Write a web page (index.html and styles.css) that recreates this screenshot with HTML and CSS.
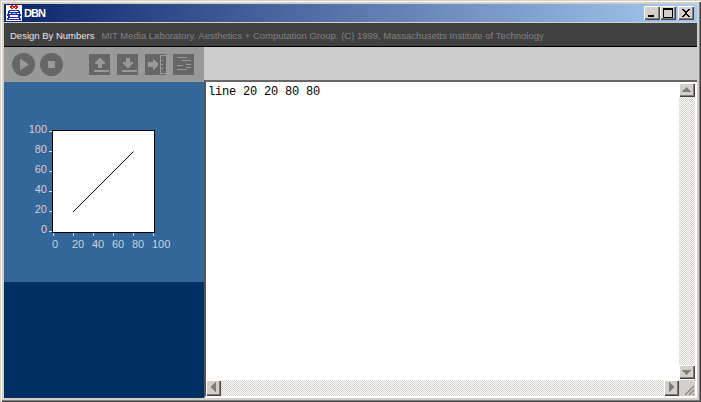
FILE: index.html
```html
<!DOCTYPE html>
<html lang="en">
<head>
<meta charset="utf-8">
<title>DBN</title>
<link rel="stylesheet" href="styles.css">
</head>
<body>
<div class="window">
  <header class="titlebar">
    <svg class="app-icon" width="16" height="16" viewBox="0 0 16 16" shape-rendering="crispEdges">
      <rect width="16" height="16" fill="#fff"/>
      <path d="M5 0h2v1h2V0h2v1h1v2h-1v1H9V3h1V2H9v1H7V2H6v1h1v1H5V3H4V1h1z" fill="#e01010"/>
      <path d="M3 5h10v1h1v3h1v2h-1v2h1v2H1v-2h1v-2H1V9h1V6h1z" fill="#1c2cb0"/>
      <path d="M4 6h8v1H4zM3 8h2v1H3zM11 8h2v1h-2zM4 10h8v2H4zM3 13h10v1H3z" fill="#fff"/>
      <path d="M6 8h4v1H6z" fill="#9aa4e8"/>
    </svg>
    <span class="app-name">DBN</span>
    <div class="win-controls">
      <button class="win-btn"><svg width="16" height="14" shape-rendering="crispEdges"><rect x="4" y="9" width="6" height="2"/></svg></button>
      <button class="win-btn"><svg width="16" height="14" shape-rendering="crispEdges"><path d="M3 2h10v10H3z M4 4v7h8V4z" fill-rule="evenodd"/></svg></button>
      <button class="win-btn win-close"><svg width="16" height="14" shape-rendering="crispEdges"><path d="M4 3h2v1h1v1h2V4h1V3h2v1h-1v1h-1v1H9v2h1v1h1v1h1v1h-2v-1H9V9H7v1H6v1H4v-1h1V9h1V8h1V6H6V5H5V4H4z"/></svg></button>
    </div>
  </header>
  <div class="infobar">
    <span class="info-title">Design By Numbers</span>
    <span class="info-credit">MIT Media Laboratory. Aesthetics + Computation Group. (C) 1999, Massachusetts Institute of Technology</span>
  </div>
  <div class="toolbar">
    <div class="tools">
      <div class="round-tool"><svg width="23" height="23"><path d="M8 5.500 17 11.500 8 17.500z"/></svg></div>
      <div class="round-tool"><svg width="23" height="23" shape-rendering="crispEdges"><rect x="8" y="8" width="7" height="7"/></svg></div>
      <div class="square-group">
        <div class="square-tool"><svg width="21" height="21" shape-rendering="crispEdges"><path d="M10 4h2v1h1v1h1v1h1v1h1v2h-3v4H9v-4H6V8h1V7h1V6h1V5h1z M5 16h15v2H5z"/></svg></div>
        <div class="square-tool"><svg width="21" height="21" shape-rendering="crispEdges"><path d="M9 4h4v4h3v2h-1v1h-1v1h-1v1h-1v1h-2v-1H9v-1H8v-1H7v-1H6V8h3z M5 16h15v2H5z"/></svg></div>
        <div class="square-tool"><svg width="21" height="21" shape-rendering="crispEdges"><path d="M3 8h5V5h1v1h1v1h1v1h1v1h1v3h-1v1h-1v1h-1v1H9v1H8v-3H3z"/><path d="M15 1h1v19h-1zM15 1h6v1h-6zM15 19h6v1h-6zM16 6h2v1h-2zM16 10h2v1h-2zM16 14h2v1h-2z"/></svg></div>
        <div class="square-tool"><svg width="21" height="21" shape-rendering="crispEdges"><path d="M4 3h10v1H4zM9 6h9v1H9zM13 10h5v1h-5zM4 11h6v1H4zM13 13h5v1h-5zM4 15h10v1H4z"/></svg></div>
      </div>
    </div>
    <div class="toolbar-rest"></div>
  </div>
  <div class="client">
    <aside class="side">
      <div class="display">
        <svg class="plot" width="200" height="200" viewBox="0 0 200 200" shape-rendering="crispEdges">
          <rect x="48.500" y="48.500" width="102" height="102" fill="#fff" stroke="#000"/>
          <path d="M45 49h3v1h-3zM45 69h3v1h-3zM45 89h3v1h-3zM45 109h3v1h-3zM45 129h3v1h-3zM45 149h3v1h-3zM49 151h1v3h-1zM69 151h1v3h-1zM89 151h1v3h-1zM109 151h1v3h-1zM129 151h1v3h-1zM149 151h1v3h-1z" fill="#ddd"/>
          <line x1="69" y1="130" x2="129.500" y2="69.500" stroke="#000" shape-rendering="auto"/>
          <g class="y-labels">
            <text x="43" y="51">100</text>
            <text x="43" y="71">80</text>
            <text x="43" y="91">60</text>
            <text x="43" y="111">40</text>
            <text x="43" y="131">20</text>
            <text x="43" y="151">0</text>
          </g>
          <g class="x-labels">
            <text x="48" y="166">0</text>
            <text x="68" y="166">20</text>
            <text x="88" y="166">40</text>
            <text x="108" y="166">60</text>
            <text x="128" y="166">80</text>
            <text x="148" y="166">100</text>
          </g>
        </svg>
      </div>
      <div class="message"></div>
    </aside>
    <main class="editor">
      <div class="code">line 20 20 80 80</div>
      <div class="vbar">
        <div class="sb-btn"><svg width="15" height="14" shape-rendering="crispEdges"><path d="M7 4h1v1h1v1h1v1h1v1h1v1H3V8h1V7h1V6h1V5h1z"/></svg></div>
        <div class="track"></div>
        <div class="sb-btn"><svg width="15" height="14" shape-rendering="crispEdges"><path d="M3 5h9v1h-1v1h-1v1H9v1H8v1H7V9H6V8H5V7H4V6H3z"/></svg></div>
      </div>
      <div class="hbar">
        <div class="sb-btn"><svg width="15" height="14" shape-rendering="crispEdges"><path d="M9 2h1v10H9v-1H8v-1H7V9H6V8H5V6h1V5h1V4h1V3h1z"/></svg></div>
        <div class="track"></div>
        <div class="sb-btn"><svg width="15" height="14" shape-rendering="crispEdges"><path d="M5 2h1v1h1v1h1v1h1v1h1v2H9v1H8v1H7v1H6v1H5z"/></svg></div>
      </div>
      <div class="corner"><svg width="16" height="16" shape-rendering="auto"><path d="M6 15 15 6M10 15l5-5M14 15l1-1" stroke="#808080" stroke-width="1.200" fill="none"/></svg></div>
    </main>
  </div>
</div>
</body>
</html>
```
FILE: styles.css
```css
* { box-sizing: border-box; }
html, body { margin: 0; padding: 0; }
body { background: #d4d0c8; overflow: hidden; }

.window {
  width: 701px;
  height: 402px;
  padding: 4px;
  background: #d4d0c8;
  box-shadow: inset 1px 1px 0 #d4d0c8, inset 2px 2px 0 #fff, inset -1px -1px 0 #404040, inset -2px -2px 0 #808080;
  display: flex;
  flex-direction: column;
}

.titlebar {
  height: 18px;
  flex: none;
  display: flex;
  align-items: center;
  padding-left: 2px;
  background: linear-gradient(90deg, #0a246a, #a6caf0);
}
.app-icon { flex: none; margin-right: 2px; }
.app-name {
  font: bold 11px "Liberation Sans", sans-serif;
  color: #fff;
  letter-spacing: -0.9px;
}
.win-controls { margin-left: auto; margin-right: 3px; display: flex; }
.win-btn {
  width: 16px;
  height: 14px;
  padding: 0;
  border: 0;
  background: #d4d0c8;
  box-shadow: inset 1px 1px 0 #fff, inset -1px -1px 0 #404040, inset -2px -2px 0 #808080;
  display: block;
}
.win-btn svg { display: block; }
.win-close { margin-left: 2px; }

.infobar {
  height: 25px;
  flex: none;
  background: #404040;
  border-top: 1px solid #d4d0c8;
  border-bottom: 1px solid #000;
  display: flex;
  align-items: center;
  padding: 1px 0 0 6px;
  font: 9.5px "Liberation Sans", sans-serif;
  white-space: nowrap;
}
.info-title { color: #e8e8e8; margin-right: 7px; }
.info-credit { color: #808080; }

.toolbar { height: 35px; flex: none; display: flex; }
.tools {
  width: 200px;
  flex: none;
  background: #999;
  display: flex;
  align-items: center;
  padding-left: 8px;
  gap: 5px;
}
.toolbar-rest { flex: 1; background: #ccc; border-bottom: 2px solid #666; }
.round-tool {
  width: 23px;
  height: 23px;
  border-radius: 50%;
  background: #666;
}
.round-tool svg, .square-tool svg { display: block; fill: #999; }
.square-group { display: flex; gap: 7px; margin-left: 21px; }
.square-tool { width: 21px; height: 21px; background: #666; }

.client { flex: 1; display: flex; min-height: 0; }
.side {
  width: 200px;
  flex: none;
  display: flex;
  flex-direction: column;
}
.display { height: 200px; flex: none; background: #336699; }
.plot { display: block; }
.plot text { font: 11px "Liberation Sans", sans-serif; fill: #d0d0d0; }
.y-labels text { text-anchor: end; }
.message { flex: 1; background: #003063; }

.editor {
  flex: 1;
  display: grid;
  grid-template-columns: 1fr 16px;
  grid-template-rows: 1fr 16px;
  border-left: 2px solid #555;
  border-right: 2px solid #fff;
  border-bottom: 2px solid #fff;
  background: #fff;
  min-width: 0;
}
.code {
  padding: 3px 0 0 2px;
  font: 12px/14px "Liberation Mono", monospace;
  letter-spacing: -0.2px;
  color: #000;
  white-space: pre;
}
.vbar { display: flex; flex-direction: column; padding: 1px 0; }
.hbar { display: flex; }
.track {
  flex: 1;
  background: repeating-conic-gradient(#d4d0c8 0 25%, #fff 0 50%) 0 0 / 2px 2px;
}
.sb-btn {
  flex: none;
  width: 15px;
  height: 14px;
  background: #d4d0c8;
  box-shadow: inset 1px 1px 0 #fff, inset -1px -1px 0 #404040, inset -2px -2px 0 #808080;
}
.vbar .sb-btn { width: 16px; }
.hbar .sb-btn { height: 16px; }
.sb-btn svg { display: block; fill: #808080; }
.corner { background: #d4d0c8; }
.corner svg { display: block; }
```
